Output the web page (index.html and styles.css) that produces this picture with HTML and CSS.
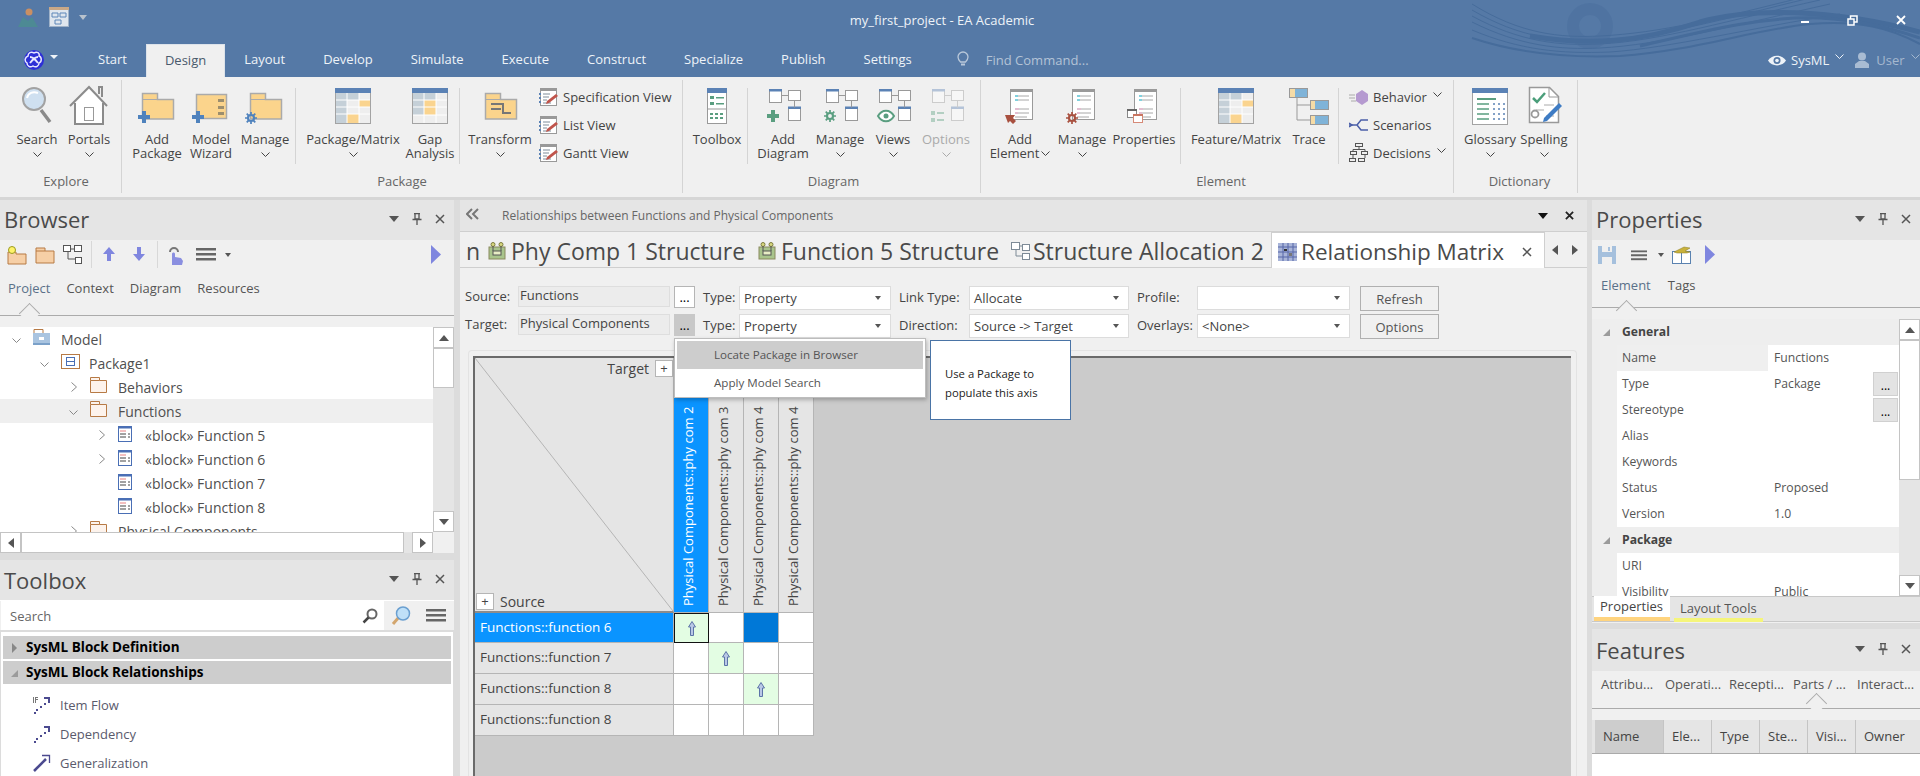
FILE: index.html
```html
<!DOCTYPE html>
<html lang="en">
<head>
  <meta charset="UTF-8" />
  <title>my_first_project - EA Academic</title>
  <link rel="stylesheet" href="styles.css">
</head>
<body>
  <svg class="defs" width="0" height="0">
    <defs>
      <symbol id="folder" viewBox="0 0 40 40"><path d="M5.5 8.5h15v6h16v19.500h-31z" fill="#fbd48c" stroke="#aaa" stroke-width="1.500"/><path d="M5.500 14.500h15" stroke="#aaa"/></symbol>
      <symbol id="plus-blue" viewBox="0 0 14 14"><path d="M5 1h4v4h4v4H9v4H5V9H1V5h4z" fill="#4f82bd"/></symbol>
      <symbol id="plus-green" viewBox="0 0 14 14"><path d="M5 1h4v4h4v4H9v4H5V9H1V5h4z" fill="#5a9e80"/></symbol>
      <symbol id="gear" viewBox="0 0 14 14"><circle cx="7" cy="7" r="3.500" fill="none" stroke="currentColor" stroke-width="2.500"/><path d="M7 0v3M7 11v3M0 7h3M11 7h3M2 2l2 2M10 10l2 2M12 2l-2 2M4 10l-2 2" stroke="currentColor" stroke-width="2"/></symbol>
      <symbol id="matrix" viewBox="0 0 40 40"><rect x="2.500" y="3.500" width="35" height="35" fill="#eee" stroke="#a3a3a3"/><rect x="2" y="3" width="36" height="5" fill="#5b82b5"/><path d="M3 8h11v30H3z" fill="#c5d0d8"/><path d="M14 8h12v7H14z" fill="#c5d0d8"/><path d="M26 15h11v7H26z" fill="#fad48f"/><path d="M14 29h12v9H14z" fill="#fad48f"/><path d="M3 15h34M3 22h34M3 29h34M14 8v30M26 8v30" stroke="#fff"/></symbol>
      <symbol id="matrix2" viewBox="0 0 40 40"><rect x="2.500" y="3.500" width="35" height="35" fill="#eee" stroke="#a3a3a3"/><rect x="2" y="3" width="36" height="5" fill="#5b82b5"/><path d="M3 8h11v22H3zM14 8h12v7H14z" fill="#c5d0d8"/><path d="M14 15h12v15H14z" fill="#fad48f"/><path d="M3 15h34M3 22h34M3 30h34M14 8v30M26 8v30" stroke="#fff"/></symbol>
      <symbol id="spec" viewBox="0 0 20 20"><rect x="1.500" y="1.500" width="16" height="17" fill="#fff" stroke="#999"/><path d="M1 1h17v3H1z" fill="#999"/><path d="M4 7h7M4 10h6M4 13h4M4 16h8" stroke="#7f8c99"/><path d="M0 6h2v2H0zM0 10h2v2H0zM0 14h2v2H0z" fill="#5b82b5"/><path d="M8 14l9-7 2 2-9 7-3 1z" fill="#c0544b"/></symbol>
      <symbol id="diagram" viewBox="0 0 40 40"><rect x="6.500" y="5.500" width="12" height="12" fill="#fff" stroke="#999"/><path d="M6 4h13v2.500H6z" fill="#5b82b5"/><rect x="25.500" y="5.500" width="12" height="10" fill="#fff" stroke="#999"/><rect x="25.500" y="22.500" width="12" height="13" fill="#fff" stroke="#999"/><path d="M25 21.500h13V24H25z" fill="#5b82b5"/><path d="M19 10.500h6M31.500 15.500v7" stroke="#999"/></symbol>
      <symbol id="sheet" viewBox="0 0 40 40"><rect x="10.500" y="4.500" width="22" height="30" fill="#fff" stroke="#9a9a9a"/><path d="M10 4h23v3H10z" fill="#9a9a9a"/><path d="M15 11h14M15 15h14M15 24h14M15 28h14M15 32h12" stroke="#a8a8a8"/><path d="M15 11h3M15 15h3" stroke="#33cfe8"/><path d="M15 24h4M15 28h3" stroke="#f2a9cf"/></symbol>
      <symbol id="block" viewBox="0 0 14 16"><rect x=".5" y=".5" width="13" height="15" fill="#fff" stroke="#4a6fb5"/><path d="M0 0h14v2.500H0z" fill="#4a6fb5"/><path d="M2 5h6" stroke="#e88080"/><path d="M2 8h6M2 11h6M10 8h2M10 11h2" stroke="#444"/></symbol>
      <symbol id="tree-folder" viewBox="0 0 17 17"><path d="M.5 3.500V.5h9v3h7v12H.5z" fill="#fdf3ec" stroke="#b77a45"/><path d="M.5 3.500h9" stroke="#b77a45"/></symbol>
      <symbol id="hamburger" viewBox="0 0 20 13"><path d="M0 0h20v2.500H0zM0 5h20v2.500H0zM0 10h20v2.500H0z" fill="#666"/></symbol>
      <symbol id="play" viewBox="0 0 10 19"><path d="M0 0l10 9.500L0 19z" fill="#7f86df"/></symbol>
      <symbol id="pin" viewBox="0 0 10 12"><path d="M2 .5h6M3 1v5h4V1M.5 6.500h9M5 7v5" fill="none" stroke="#555" stroke-width="1.300"/></symbol>
      <symbol id="cross" viewBox="0 0 10 10"><path d="M1 1l8 8M9 1L1 9" stroke="#555" stroke-width="1.500"/></symbol>
      <symbol id="chev-d" viewBox="0 0 9 5"><path d="M.5.500l4 4 4-4" fill="none" stroke="currentColor"/></symbol>
      <symbol id="chev-r" viewBox="0 0 6 10"><path d="M.5.500l5 4.500-5 4.500" fill="none" stroke="#888"/></symbol>
      <symbol id="up-arrow" viewBox="0 0 10 15"><path d="M5 .5L8.500 6H6.500v8.500h-3V6h-2z" fill="#b9c8e6" stroke="#5c74a8"/></symbol>
      <symbol id="struct" viewBox="0 0 18 18"><rect x="1" y="5" width="16" height="12" fill="#a9c48c" stroke="#8a8a5e"/><rect x="5" y="9" width="8" height="4" fill="#e8edc5" stroke="#555"/><circle cx="5" cy="2.500" r="2" fill="#d6d67e" stroke="#7c7c3e"/><circle cx="13" cy="2.500" r="2" fill="#d6d67e" stroke="#7c7c3e"/><path d="M5 4v5M13 4v5" stroke="#555"/></symbol>
    </defs>
  </svg>

  <div class="app">
    <div class="top">
      <svg class="swoosh" width="450" height="62" viewBox="0 0 450 62" fill="none" stroke="#466c9b">
        <circle cx="120" cy="26" r="17" stroke-width="12" opacity=".4"/>
        <path d="M2 4C50 34 90 38 130 36 190 33 250 18 330-2"/>
        <path d="M2 10C50 38 90 42 130 40 190 37 250 20 340-2"/>
        <path d="M2 16C50 42 90 46 130 44 190 41 260 20 350 0"/>
        <path d="M2 22C50 46 90 50 130 48 190 45 270 24 360 4"/>
        <path d="M2 30C50 50 90 54 140 52 200 48 280 28 370 14"/>
        <path d="M2 38C50 54 100 58 150 56 230 50 280 30 340 24 390 20 420 28 450 44" stroke-width="2"/>
        <path d="M60 36C120 46 170 42 230 22 280 8 360 8 450 32" stroke-width="5"/>
        <path d="M170 46C230 32 290 16 350 18 390 20 420 28 450 38" stroke-width="3"/>
      </svg>
      <header class="titlebar">
        <div class="quick">
          <svg class="q-user" width="20" height="19" viewBox="0 0 20 19"><circle cx="11" cy="4" r="3.500" fill="#c98f63"/><path d="M0 19l5-10 5 4 4-4 6 10z" fill="#4d8a94"/></svg>
          <svg class="q-diag" width="20" height="20" viewBox="0 0 20 20"><rect x=".5" y=".5" width="19" height="19" fill="#dfe6ee" stroke="#9fb2c8"/><path d="M0 0h20v3H0z" fill="#c9a887"/><path d="M3 6h6v4H3zM11 6h6v4h-6zM6 13h6v4H6z" fill="none" stroke="#5d86b8"/></svg>
          <span class="q-caret"></span>
        </div>
        <div class="title">my_first_project - EA Academic</div>
        <div class="winbtns">
          <span class="w-min"></span>
          <svg width="11" height="11" viewBox="0 0 11 11" fill="none" stroke="#fff" stroke-width="1.500"><rect x="3.500" y="1" width="6.500" height="6"/><rect x="1" y="4" width="6" height="6" fill="#5579a6"/></svg>
          <svg width="10" height="10" viewBox="0 0 10 10"><path d="M1 1l8 8M9 1L1 9" stroke="#fff" stroke-width="1.800"/></svg>
        </div>
      </header>

      <nav class="menu">
        <svg class="logo" width="20" height="20" viewBox="0 0 20 20"><circle cx="10" cy="10" r="10" fill="#2d2fd6"/><path d="M10 3c3-2 6 0 5 3 3 1 3 6 0 7 0 3-3 5-6 3-3 2-6 0-6-3-3-2-2-6 1-7 0-3 3-5 6-3z" fill="none" stroke="#e8e8ff" stroke-width="1.500"/><path d="M6 7c3 0 5 2 8 6M14 7c-3 0-5 2-8 6" fill="none" stroke="#e8e8ff" stroke-width="1.800"/></svg>
        <span class="logo-caret"></span>
        <a>Start</a>
        <a class="current">Design</a>
        <a>Layout</a>
        <a>Develop</a>
        <a>Simulate</a>
        <a>Execute</a>
        <a>Construct</a>
        <a>Specialize</a>
        <a>Publish</a>
        <a>Settings</a>
        <svg class="bulb" width="12" height="16" viewBox="0 0 12 16" fill="none" stroke="#b9c8da" stroke-width="1.300"><path d="M3.500 11C2 9.500 1 8.500 1 6a5 5 0 0 1 10 0c0 2.500-1 3.500-2.500 5z"/><path d="M4 13.500h4" stroke-width="2"/></svg>
        <span class="find">Find Command...</span>
        <div class="persp">
          <svg width="18" height="13" viewBox="0 0 18 13"><path d="M0 6.500C4 0 14 0 18 6.500 14 13 4 13 0 6.500z" fill="#eef3f8"/><circle cx="9" cy="6.500" r="3.500" fill="#5579a6"/><circle cx="9" cy="6.500" r="1.800" fill="#eef3f8"/></svg>
          <span class="p-name">SysML</span>
          <svg class="chev-w" width="9" height="5"><use href="#chev-d"/></svg>
          <svg class="p-user" width="14" height="16" viewBox="0 0 14 16"><circle cx="7" cy="4.500" r="4" fill="#a9bcd3"/><path d="M0 16v-4l4-3h6l4 3v4z" fill="#a9bcd3"/></svg>
          <span class="p-user-name">User</span>
          <svg class="chev-dim" width="9" height="5"><use href="#chev-d"/></svg>
        </div>
      </nav>
    </div>

    <section class="ribbon">
      <div class="rb-group g-explore">
        <div class="rb-items">
          <div class="rb-btn w52">
            <svg class="rb-ico" width="40" height="40" viewBox="0 0 40 40"><path d="M24 25l9 12" stroke="#8a8a8a" stroke-width="3.500"/><circle cx="17" cy="14" r="11" fill="#cfe0f0" stroke="#a2a2a2" stroke-width="2"/><path d="M10 13c1-5 6-7 11-5" stroke="#fff" stroke-width="2" fill="none"/></svg>
            <span>Search</span>
            <svg class="chev" width="9" height="5"><use href="#chev-d"/></svg>
          </div>
          <div class="rb-btn w52">
            <svg class="rb-ico" width="40" height="40" viewBox="0 0 40 40"><path d="M5 19L20 4l15 15v20H5z" fill="#fff"/><path d="M1 21L20 2l18 19M6 18v21h28V18M30 9V2h3v10" fill="none" stroke="#8b8b8b" stroke-width="2"/><rect x="15.500" y="22.500" width="9" height="13" fill="#fff" stroke="#999"/></svg>
            <span>Portals</span>
            <svg class="chev" width="9" height="5"><use href="#chev-d"/></svg>
          </div>
        </div>
        <div class="rb-label">Explore</div>
      </div>

      <div class="rb-group g-package">
        <div class="rb-items">
          <div class="rb-btn w54">
            <svg class="rb-ico" width="40" height="40"><use href="#folder" width="40" height="40"/><use href="#plus-blue" x="0" y="25" width="14" height="14"/></svg>
            <span>Add<br>Package</span>
          </div>
          <div class="rb-btn w54">
            <svg class="rb-ico" width="40" height="40"><path d="M5.500 9.500h30v24h-30z" fill="#fbd48c" stroke="#aaa" stroke-width="1.500"/><path d="M27 14h6v3h-6zM27 21h6v3h-6zM27 27h6v3h-6z" fill="#9c8e6e"/><use href="#plus-blue" x="0" y="25" width="14" height="14"/></svg>
            <span>Model<br>Wizard</span>
          </div>
          <div class="rb-btn w54">
            <svg class="rb-ico gear-blue" width="40" height="40"><use href="#folder" width="40" height="40"/><use href="#gear" x="0" y="27" width="12" height="12"/></svg>
            <span>Manage</span>
            <svg class="chev" width="9" height="5"><use href="#chev-d"/></svg>
          </div>
          <i class="rb-sep sep-a"></i>
          <div class="rb-btn w100">
            <svg class="rb-ico" width="40" height="40"><use href="#matrix" width="40" height="40"/></svg>
            <span>Package/Matrix</span>
            <svg class="chev" width="9" height="5"><use href="#chev-d"/></svg>
          </div>
          <div class="rb-btn w54">
            <svg class="rb-ico" width="40" height="40"><use href="#matrix2" width="40" height="40"/></svg>
            <span>Gap<br>Analysis</span>
          </div>
          <i class="rb-sep sep-b"></i>
          <div class="rb-btn w74">
            <svg class="rb-ico" width="40" height="40"><use href="#folder" width="40" height="40"/><path d="M11 19h12v9h8M15 24h-4M21 24h-6" fill="none" stroke="#777" stroke-width="2"/></svg>
            <span>Transform</span>
            <svg class="chev" width="9" height="5"><use href="#chev-d"/></svg>
          </div>
          <div class="rb-list l-views">
            <div class="rb-row"><svg width="20" height="20"><use href="#spec" width="20" height="20"/></svg><span>Specification View</span></div>
            <div class="rb-row"><svg width="20" height="20"><use href="#spec" width="20" height="20"/></svg><span>List View</span></div>
            <div class="rb-row"><svg width="20" height="20"><use href="#spec" width="20" height="20"/></svg><span>Gantt View</span></div>
          </div>
        </div>
        <div class="rb-label">Package</div>
      </div>

      <div class="rb-group g-diagram">
        <div class="rb-items">
          <div class="rb-btn w60">
            <svg class="rb-ico" width="40" height="40" viewBox="0 0 40 40"><rect x="10.500" y="3.500" width="19" height="35" fill="#fff" stroke="#999"/><path d="M10 3h20v5H10z" fill="#5b82b5"/><path d="M13 11h4v3h-4zM13 17h4v3h-4zM19 12h8v1.500h-8zM19 18h8v1.500h-8zM13 28h3v2h-3zM18 28h3v2h-3zM23 28h3v2h-3zM13 32h3v2h-3zM18 32h3v2h-3zM23 32h3v2h-3z" fill="#5a9e80"/><path d="M11 24h18" stroke="#999"/></svg>
            <span>Toolbox</span>
          </div>
          <i class="rb-sep sep-c"></i>
          <div class="rb-btn w58">
            <svg class="rb-ico" width="40" height="40"><use href="#diagram" width="40" height="40"/><use href="#plus-green" x="3" y="24" width="14" height="14"/></svg>
            <span>Add<br>Diagram</span>
          </div>
          <div class="rb-btn w56">
            <svg class="rb-ico gear-green" width="40" height="40"><use href="#diagram" width="40" height="40"/><use href="#gear" x="4" y="25" width="12" height="12"/></svg>
            <span>Manage</span>
            <svg class="chev" width="9" height="5"><use href="#chev-d"/></svg>
          </div>
          <div class="rb-btn w50">
            <svg class="rb-ico" width="40" height="40"><use href="#diagram" width="40" height="40"/><path d="M5 31c4-7 12-7 16 0-4 7-12 7-16 0z" fill="#fff" stroke="#5a9e80" stroke-width="2"/><circle cx="13" cy="31" r="2.500" fill="#5a9e80"/></svg>
            <span>Views</span>
            <svg class="chev" width="9" height="5"><use href="#chev-d"/></svg>
          </div>
          <div class="rb-btn w56 disabled">
            <svg class="rb-ico faded" width="40" height="40"><use href="#diagram" width="40" height="40"/><path d="M5 26h4v4H5zM5 33h4v4H5zM11 27h7v2h-7zM11 34h7v2h-7z" fill="#5a9e80"/></svg>
            <span>Options</span>
            <svg class="chev" width="9" height="5"><use href="#chev-d"/></svg>
          </div>
        </div>
        <div class="rb-label">Diagram</div>
      </div>

      <div class="rb-group g-element">
        <div class="rb-items">
          <div class="rb-btn w62">
            <svg class="rb-ico" width="40" height="40"><use href="#sheet" width="40" height="40"/><path d="M5 30h10l-2 3 3 3-3 3-3-3-2 2z" fill="#a8503f"/></svg>
            <span>Add<br>Element<svg class="chev-in" width="9" height="5"><use href="#chev-d"/></svg></span>
          </div>
          <div class="rb-btn w62">
            <svg class="rb-ico gear-red" width="40" height="40"><use href="#sheet" width="40" height="40"/><use href="#gear" x="4" y="27" width="12" height="12"/></svg>
            <span>Manage</span>
            <svg class="chev" width="9" height="5"><use href="#chev-d"/></svg>
          </div>
          <div class="rb-btn w62">
            <svg class="rb-ico" width="40" height="40"><use href="#sheet" width="40" height="40"/><rect x="3.500" y="24.500" width="9" height="8" fill="#fff" stroke="#888"/><path d="M3 24h10v2H3z" fill="#666"/><rect x="9.500" y="29.500" width="9" height="8" fill="#fff" stroke="#d68a78"/><path d="M9 29h10v2H9z" fill="#c97560"/></svg>
            <span>Properties</span>
          </div>
          <i class="rb-sep sep-d"></i>
          <div class="rb-btn w100">
            <svg class="rb-ico" width="40" height="40"><use href="#matrix" width="40" height="40"/></svg>
            <span>Feature/Matrix</span>
          </div>
          <div class="rb-btn w46">
            <svg class="rb-ico" width="40" height="40" viewBox="0 0 40 40"><path d="M8 14v23M8 22h14M8 37h14" transform="translate(0 -2)" stroke="#999" fill="none"/><rect x=".5" y="3.500" width="18" height="9" fill="#7fb3d8" stroke="#999"/><path d="M1 4h5v8H1z" fill="#f5dba6"/><rect x="21.500" y="15.500" width="18" height="9" fill="#7fb3d8" stroke="#999"/><path d="M22 16h4v8h-4z" fill="#f5dba6"/><rect x="21.500" y="30.500" width="18" height="9" fill="#7fb3d8" stroke="#999"/><path d="M22 31h4v8h-4z" fill="#f5dba6"/></svg>
            <span>Trace</span>
          </div>
          <i class="rb-sep sep-e"></i>
          <div class="rb-list l-elem">
            <div class="rb-row">
              <svg width="20" height="20" viewBox="0 0 20 20"><path d="M0 8h6M0 11h6M2 14h5" stroke="#aaa"/><path d="M13 3l6 4v7l-6 4-6-4V7z" fill="#b59ad0"/></svg>
              <span>Behavior</span><svg class="chev-in" width="9" height="5"><use href="#chev-d"/></svg>
            </div>
            <div class="rb-row">
              <svg width="20" height="20" viewBox="0 0 20 20" fill="none" stroke="#4b5fa8" stroke-width="1.500"><path d="M0 10h8M8 10l4-5h7M8 10l4 5h7"/><path d="M0 8l3 2-3 2" /></svg>
              <span>Scenarios</span>
            </div>
            <div class="rb-row">
              <svg width="20" height="20" viewBox="0 0 20 20" fill="none" stroke="#555"><rect x="6.500" y=".5" width="7" height="3"/><rect x="1.500" y="8.500" width="6" height="3"/><rect x="12.500" y="8.500" width="6" height="3"/><rect x=".5" y="15.500" width="6" height="3"/><rect x="9.500" y="15.500" width="6" height="3"/><path d="M10 4v3M4 8V6.500h12V8M4 12v3M16 12v3"/></svg>
              <span>Decisions</span><svg class="chev-in" width="9" height="5"><use href="#chev-d"/></svg>
            </div>
          </div>
        </div>
        <div class="rb-label">Element</div>
      </div>

      <div class="rb-group g-dict">
        <div class="rb-items">
          <div class="rb-btn w56">
            <svg class="rb-ico" width="40" height="40" viewBox="0 0 40 40"><rect x="2.500" y="3.500" width="35" height="36" fill="#fff" stroke="#a3a3a3"/><path d="M2 3h36v5H2z" fill="#5b82b5"/><path d="M7 13h19v2H7z" fill="#5a9e80"/><path d="M7 19h12M7 24h12M7 29h12M7 34h12" stroke="#5a9e80" stroke-width="1.500"/><path d="M23 19h2M28 19h2M33 19h2M23 24h2M28 24h2M33 24h2M23 29h2M28 29h2M33 29h2M23 34h2M28 34h2M33 34h2" stroke="#5b82b5" stroke-width="1.500"/></svg>
            <span>Glossary</span>
            <svg class="chev" width="9" height="5"><use href="#chev-d"/></svg>
          </div>
          <div class="rb-btn w52">
            <svg class="rb-ico" width="40" height="40" viewBox="0 0 40 40"><path d="M5.500 2.500h20l9 9v26h-29z" fill="#fff" stroke="#999" stroke-width="1.500"/><path d="M25 3v9h9" fill="none" stroke="#999"/><path d="M9 13l4 4 8-9" fill="none" stroke="#4b9e7a" stroke-width="2.500"/><path d="M20 20h10M12 25h8M22 31h8" stroke="#aaa"/><circle cx="11" cy="29" r="3.500" fill="none" stroke="#999" stroke-width="1.800"/><path d="M20 33l15-15 3 3-15 15-4 1z" fill="#3f7cc4"/></svg>
            <span>Spelling</span>
            <svg class="chev" width="9" height="5"><use href="#chev-d"/></svg>
          </div>
        </div>
        <div class="rb-label">Dictionary</div>
      </div>
    </section>

    <main class="workspace">
      <div class="side">
        <section class="browser">
          <div class="pane-head">
            <h2>Browser</h2>
            <div class="pane-ctrl">
              <i class="tri"></i>
              <svg width="10" height="12"><use href="#pin"/></svg>
              <svg width="10" height="10"><use href="#cross"/></svg>
            </div>
          </div>
          <div class="tbar">
            <svg class="b1" width="20" height="19" viewBox="0 0 20 19"><path d="M1 6h8v2h10v10H1z" fill="#f6cfa6" stroke="#b77a45"/><circle cx="5" cy="4" r="3.500" fill="#fff36a" stroke="#9a9a20"/></svg>
            <svg class="b2" width="20" height="17" viewBox="0 0 20 17"><path d="M1 4V1h9v3h9v12H1z" fill="#f6cfa6" stroke="#b77a45"/><path d="M1 4h9" stroke="#b77a45"/></svg>
            <svg class="b3" width="20" height="20" viewBox="0 0 20 20" fill="#fff" stroke="#555"><rect x=".5" y=".5" width="7" height="6"/><rect x="11.500" y=".5" width="7" height="6"/><rect x="12.500" y="12.500" width="6" height="6"/><path d="M8 4h3M5 7v7h7" fill="none"/></svg>
            <i class="tsep s1"></i>
            <svg class="b4" width="12" height="14" viewBox="0 0 12 14"><path d="M6 0l6 7H8v7H4V7H0z" fill="#7f86df"/></svg>
            <svg class="b5" width="12" height="14" viewBox="0 0 12 14"><path d="M6 14L0 7h4V0h4v7h4z" fill="#7f86df"/></svg>
            <i class="tsep s2"></i>
            <svg class="b6" width="16" height="20" viewBox="0 0 16 20"><path d="M4 20V9c0-2 3-2 3 0v3l6 1 2 3-1 4z" fill="#8a8fe0"/><path d="M2 7a4 4 0 1 1 8 0" fill="none" stroke="#777" stroke-width="2"/></svg>
            <svg class="b7" width="20" height="13"><use href="#hamburger"/></svg>
            <i class="tcaret b8"></i>
            <svg class="b9" width="10" height="19"><use href="#play"/></svg>
          </div>
          <div class="subtabs st-browser">
            <a class="on">Project</a><a>Context</a><a>Diagram</a><a>Resources</a>
          </div>
          <div class="tree-wrap">
            <div class="tree">
              <div class="t-row l0"><svg class="tw" width="9" height="5"><use href="#chev-d"/></svg><svg class="ti" width="17" height="17" viewBox="0 0 17 17"><path d="M1 4V.5h9V4" fill="#fff" stroke="#b77a45"/><path d="M0 4h17v12H0z" fill="#a9c4e0"/><path d="M0 14h17v2H0z" fill="#7ba1c9"/><rect x="6" y="8" width="5" height="3" fill="#fff"/></svg><span>Model</span></div>
              <div class="t-row l1"><svg class="tw" width="9" height="5"><use href="#chev-d"/></svg><svg class="ti big" width="19" height="15" viewBox="0 0 19 15"><rect x=".5" y=".5" width="18" height="14" fill="#fff" stroke="#b77a45"/><rect x="5.500" y="3.500" width="8" height="8" fill="none" stroke="#4a6fb5"/><path d="M5 7.500h9" stroke="#4a6fb5"/></svg><span>Package1</span></div>
              <div class="t-row l2"><svg class="tr" width="6" height="10"><use href="#chev-r"/></svg><svg class="ti" width="17" height="17"><use href="#tree-folder"/></svg><span>Behaviors</span></div>
              <div class="t-row l2 hl"><svg class="tw" width="9" height="5"><use href="#chev-d"/></svg><svg class="ti" width="17" height="17"><use href="#tree-folder"/></svg><span>Functions</span></div>
              <div class="t-row l3"><svg class="tr" width="6" height="10"><use href="#chev-r"/></svg><svg class="ti" width="14" height="16"><use href="#block" width="14" height="16"/></svg><span>«block» Function 5</span></div>
              <div class="t-row l3"><svg class="tr" width="6" height="10"><use href="#chev-r"/></svg><svg class="ti" width="14" height="16"><use href="#block" width="14" height="16"/></svg><span>«block» Function 6</span></div>
              <div class="t-row l3"><i class="tn"></i><svg class="ti" width="14" height="16"><use href="#block" width="14" height="16"/></svg><span>«block» Function 7</span></div>
              <div class="t-row l3"><i class="tn"></i><svg class="ti" width="14" height="16"><use href="#block" width="14" height="16"/></svg><span>«block» Function 8</span></div>
              <div class="t-row l2"><svg class="tr" width="6" height="10"><use href="#chev-r"/></svg><svg class="ti" width="17" height="17"><use href="#tree-folder"/></svg><span>Physical Components</span></div>
            </div>
            <div class="vscroll">
              <div class="sb-btn"><i class="arr-up"></i></div>
              <div class="sb-thumb th-tree"></div>
              <div class="sb-track"></div>
              <div class="sb-btn"><i class="arr-down"></i></div>
            </div>
          </div>
          <div class="hscroll">
            <div class="sb-btn h"><i class="arr-left"></i></div>
            <div class="sb-thumb h"></div>
            <div class="sb-track"></div>
            <div class="sb-btn h"><i class="arr-right"></i></div>
            <div class="sb-corner"></div>
          </div>
        </section>

        <section class="toolbox">
          <div class="pane-head">
            <h2>Toolbox</h2>
            <div class="pane-ctrl">
              <i class="tri"></i>
              <svg width="10" height="12"><use href="#pin"/></svg>
              <svg width="10" height="10"><use href="#cross"/></svg>
            </div>
          </div>
          <div class="tb-search">
            <div class="tb-input">
              <span>Search</span>
              <svg width="16" height="16" viewBox="0 0 16 16"><circle cx="10" cy="6" r="4.500" fill="#fff" stroke="#666" stroke-width="2"/><path d="M6.500 9.500L1.500 14.500" stroke="#444" stroke-width="2.500"/></svg>
            </div>
            <svg class="tb-find" width="20" height="20" viewBox="0 0 20 20"><path d="M8 11l-6 7" stroke="#d3a66e" stroke-width="3"/><circle cx="12" cy="7.500" r="6.500" fill="#bfe0f8" stroke="#6a9fd0" stroke-width="1.500"/></svg>
            <svg class="tb-menu" width="20" height="13"><use href="#hamburger"/></svg>
          </div>
          <div class="tb-list">
            <div class="tb-band"><i class="tb-open"></i>SysML Block Definition</div>
            <div class="tb-band"><i class="tb-shut"></i>SysML Block Relationships</div>
            <div class="tb-items">
              <div class="tb-item">
                <svg width="18" height="18" viewBox="0 0 18 18" fill="#4b4a8f"><path d="M0 1h1v6H0zM2 1h3v1H3v1h2v1H3v3H2z" fill="#777"/><path d="M11 1h6v6h-2V3h-4zM11 7h2v2h-2zM7 10h2v2H7zM3 13h2v2H3zM1 16h2v2H1z"/></svg>
                <span>Item Flow</span>
              </div>
              <div class="tb-item">
                <svg width="18" height="18" viewBox="0 0 18 18" fill="#4b4a8f"><path d="M11 1h6v6h-2V3h-4zM11 7h2v2h-2zM7 10h2v2H7zM3 13h2v2H3zM1 16h2v2H1z"/></svg>
                <span>Dependency</span>
              </div>
              <div class="tb-item">
                <svg width="18" height="18" viewBox="0 0 18 18" fill="none"><path d="M1 17L13 5" stroke="#4b4a8f" stroke-width="2.500"/><path d="M9 1.500h7.500V9" stroke="#4b4a8f" stroke-width="1.300"/></svg>
                <span>Generalization</span>
              </div>
            </div>
          </div>
        </section>
      </div>

      <section class="center">
        <div class="c-head">
          <svg class="c-back" width="13" height="12" viewBox="0 0 13 12" fill="none" stroke="#777" stroke-width="2"><path d="M6 1L1 6l5 5M12 1L7 6l5 5"/></svg>
          <span class="c-title">Relationships between Functions and Physical Components</span>
          <i class="tri dark"></i>
          <svg class="c-x" width="9" height="9" viewBox="0 0 10 10"><path d="M1 1l8 8M9 1L1 9" stroke="#222" stroke-width="2"/></svg>
        </div>
        <div class="c-tabs">
          <div class="c-strip">
            <span class="ct t-cut">n</span>
            <span class="ct t-phy"><svg width="18" height="18"><use href="#struct"/></svg>Phy Comp 1 Structure</span>
            <span class="ct t-fun"><svg width="18" height="18"><use href="#struct"/></svg>Function 5 Structure</span>
            <span class="ct t-str"><svg width="20" height="18" viewBox="0 0 20 18" fill="#fff" stroke="#7d8a96"><rect x=".5" y=".5" width="8" height="7"/><rect x="11.500" y="2.500" width="7" height="6"/><rect x="11.500" y="11.500" width="7" height="6"/><path d="M9 4h2M5 8v6h6" fill="none"/></svg>Structure Allocation 2</span>
          </div>
          <div class="ct-active">
            <svg width="19" height="18" viewBox="0 0 19 18"><rect width="19" height="18" fill="#a8b4d8"/><path d="M0 4h19M0 9h19M0 14h19M5 0v18M10 0v18M15 0v18" stroke="#5667a8"/><rect x="6" y="6" width="3" height="2" fill="#333"/><rect x="11" y="10" width="3" height="3" fill="#777"/></svg>
            <span>Relationship Matrix</span>
            <svg class="ct-x" width="10" height="10"><use href="#cross"/></svg>
          </div>
          <i class="arr-left nav"></i>
          <i class="arr-right nav"></i>
        </div>
        <form class="mx-form">
          <label class="f-lab side-lab">Source:</label>
          <div class="f-box">Functions</div>
          <button type="button" class="dots">...</button>
          <label class="f-lab pl">Type:</label>
          <div class="f-sel">Property</div>
          <label class="f-lab pl">Link Type:</label>
          <div class="f-sel">Allocate</div>
          <label class="f-lab pl">Profile:</label>
          <div class="f-sel"></div>
          <button type="button" class="f-btn">Refresh</button>

          <label class="f-lab side-lab">Target:</label>
          <div class="f-box">Physical Components</div>
          <button type="button" class="dots pressed">...</button>
          <label class="f-lab pl">Type:</label>
          <div class="f-sel">Property</div>
          <label class="f-lab pl">Direction:</label>
          <div class="f-sel">Source -&gt; Target</div>
          <label class="f-lab pl">Overlays:</label>
          <div class="f-sel">&lt;None&gt;</div>
          <button type="button" class="f-btn">Options</button>
        </form>
        <div class="mx-frame">
          <div class="mx-view">
            <div class="mx-grid">
              <div class="mx-corner">
                <svg class="mx-diag" viewBox="0 0 100 100" preserveAspectRatio="none"><line x1="0" y1="0" x2="100" y2="100" stroke="#b5b5b5" stroke-width="1" vector-effect="non-scaling-stroke"/></svg>
                <div class="mx-axis ax-top"><span>Target</span><b class="mx-plus">+</b></div>
                <div class="mx-axis ax-bottom"><b class="mx-plus">+</b><span>Source</span></div>
              </div>
              <div class="mx-col sel"><span>Physical Components::phy com 2</span></div>
              <div class="mx-col"><span>Physical Components::phy com 3</span></div>
              <div class="mx-col"><span>Physical Components::phy com 4</span></div>
              <div class="mx-col"><span>Physical Components::phy com 4</span></div>

              <div class="mx-row sel">Functions::function 6</div>
              <div class="mx-cell hit cur"><svg width="10" height="15"><use href="#up-arrow"/></svg></div>
              <div class="mx-cell"></div>
              <div class="mx-cell blue"></div>
              <div class="mx-cell"></div>

              <div class="mx-row">Functions::function 7</div>
              <div class="mx-cell"></div>
              <div class="mx-cell hit"><svg width="10" height="15"><use href="#up-arrow"/></svg></div>
              <div class="mx-cell"></div>
              <div class="mx-cell"></div>

              <div class="mx-row">Functions::function 8</div>
              <div class="mx-cell"></div>
              <div class="mx-cell"></div>
              <div class="mx-cell hit"><svg width="10" height="15"><use href="#up-arrow"/></svg></div>
              <div class="mx-cell"></div>

              <div class="mx-row">Functions::function 8</div>
              <div class="mx-cell"></div>
              <div class="mx-cell"></div>
              <div class="mx-cell"></div>
              <div class="mx-cell"></div>
            </div>
          </div>
        </div>
        <div class="popup">
          <div class="popup-item on">Locate Package in Browser</div>
          <div class="popup-item">Apply Model Search</div>
        </div>
        <div class="tip">Use a Package to<br>populate this axis</div>
      </section>

      <div class="side right">
        <section class="props">
          <div class="pane-head">
            <h2>Properties</h2>
            <div class="pane-ctrl">
              <i class="tri"></i>
              <svg width="10" height="12"><use href="#pin"/></svg>
              <svg width="10" height="10"><use href="#cross"/></svg>
            </div>
          </div>
          <div class="tbar">
            <svg class="p1" width="18" height="18" viewBox="0 0 18 18"><path d="M0 0h18v18H0z" fill="#a5c0dd"/><path d="M4 0h10v6H4zM4 11h10v7H4z" fill="#f0f0f0"/><path d="M10 1h2v4h-2z" fill="#a5c0dd"/></svg>
            <svg class="p2" width="16" height="13" viewBox="0 0 20 13"><use href="#hamburger"/></svg>
            <i class="tcaret p3"></i>
            <svg class="p4" width="19" height="18" viewBox="0 0 19 18"><rect x=".5" y="5.500" width="18" height="12" fill="#fff" stroke="#5a82b0"/><path d="M9.500 6v12" stroke="#5a82b0"/><path d="M2 6l10-5 6 1-5 3 5 1-3 1H5z" fill="#c9b23c" stroke="#8a7a20" stroke-width=".5"/></svg>
            <svg class="p5" width="10" height="19"><use href="#play"/></svg>
          </div>
          <div class="subtabs st-props">
            <a class="on">Element</a><a>Tags</a>
          </div>
          <div class="pg-wrap">
            <div class="pg">
              <div class="pg-cat"><i class="tb-shut"></i><b>General</b></div>
              <div class="pg-row name"><span>Name</span><span>Functions</span></div>
              <div class="pg-row"><span>Type</span><span>Package</span><button type="button" class="pg-dots">...</button></div>
              <div class="pg-row"><span>Stereotype</span><span></span><button type="button" class="pg-dots">...</button></div>
              <div class="pg-row"><span>Alias</span><span></span></div>
              <div class="pg-row"><span>Keywords</span><span></span></div>
              <div class="pg-row"><span>Status</span><span>Proposed</span></div>
              <div class="pg-row"><span>Version</span><span>1.0</span></div>
              <div class="pg-cat"><i class="tb-shut"></i><b>Package</b></div>
              <div class="pg-row"><span>URI</span><span></span></div>
              <div class="pg-row"><span>Visibility</span><span>Public</span></div>
            </div>
            <div class="vscroll">
              <div class="sb-btn"><i class="arr-up"></i></div>
              <div class="sb-thumb th-pg"></div>
              <div class="sb-track"></div>
              <div class="sb-btn"><i class="arr-down"></i></div>
            </div>
          </div>
          <div class="dock-tabs">
            <a class="on">Properties</a>
            <a class="yl">Layout Tools</a>
          </div>
        </section>
        <section class="features">
          <div class="pane-head">
            <h2>Features</h2>
            <div class="pane-ctrl">
              <i class="tri"></i>
              <svg width="10" height="12"><use href="#pin"/></svg>
              <svg width="10" height="10"><use href="#cross"/></svg>
            </div>
          </div>
          <div class="subtabs st-feat">
            <a>Attribu...</a><a>Operati...</a><a>Recepti...</a><a class="on">Parts / ...</a><a>Interact...</a>
          </div>
          <div class="ft-gap"></div>
          <div class="ft-head">
            <span class="first">Name</span><span>Ele...</span><span>Type</span><span>Ste...</span><span>Visi...</span><span class="last">Owner</span>
          </div>
        </section>
      </div>
    </main>
  </div>
</body>
</html>
```

FILE: styles.css
```css
* {
  box-sizing: border-box;
  margin: 0;
  padding: 0;
}
html, body {
  height: 776px;
  overflow: hidden;
}
body {
  font-family: 'Open Sans', 'Noto Sans', sans-serif;
  font-size: 13px;
  color: #444;
  background: #dcdcdc;
}
.defs {
  position: absolute;
}
i {
  display: block;
  flex: none;
}
svg {
  display: block;
  flex: none;
}

/* title bar + menu */
.top {
  position: relative;
  height: 77px;
  background: #5579a6;
  color: #eef3f8;
}
.swoosh {
  position: absolute;
  left: 1470px;
  top: 0;
}
.titlebar {
  position: relative;
  height: 44px;
  display: flex;
  align-items: flex-start;
}
.quick {
  display: flex;
  width: 300px;
  padding: 7px 0 0 18px;
  align-items: center;
}
.q-caret {
  width: 0;
  height: 0;
  margin-left: 10px;
  border: 4px solid transparent;
  border-top: 5px solid #b8c2cd;
  border-bottom: 0;
}
.q-diag {
  margin-left: 11px;
}
.title {
  width: 1284px;
  padding-top: 11px;
  text-align: center;
  line-height: 18px;
}
.winbtns {
  display: flex;
  align-items: center;
  height: 40px;
  margin-left: 217px;
  gap: 38px;
}
.w-min {
  width: 8px;
  height: 2px;
  margin-top: 3px;
  background: #fff;
}
.menu {
  position: relative;
  height: 33px;
  display: flex;
  align-items: stretch;
}
.logo {
  margin: 6px 0 0 24px;
}
.logo-caret {
  width: 0;
  height: 0;
  margin: 11px 0 0 6px;
  border: 4px solid transparent;
  border-top: 4px solid #eef3f8;
  border-bottom: 0;
}
.menu a {
  padding: 0 19px;
  line-height: 30px;
}
.menu a:first-of-type {
  margin-left: 21px;
}
.menu a.current {
  background: #f0f0f0;
  color: #4a5a6c;
  border: 1px solid #dde3ea;
  border-bottom: 0;
  padding: 0 18px;
}
.bulb {
  margin: 7px 0 0 26px;
}
.find {
  margin-left: 17px;
  line-height: 32px;
  color: #b4c3d6;
}
.persp {
  position: absolute;
  left: 1768px;
  top: 0;
  height: 32px;
  display: flex;
  align-items: center;
}
.p-name {
  margin-left: 5px;
}
.chev-w {
  margin: -8px 0 0 6px;
}
.p-user {
  margin-left: 11px;
}
.p-user-name {
  margin-left: 7px;
  color: #a5b8cf;
}
.chev-dim {
  margin: -8px 0 0 6px;
  color: #a5b8cf;
}

/* ribbon */
.ribbon {
  height: 123px;
  padding-top: 3px;
  display: flex;
  background: #f0f0f0;
  border-bottom: 3px solid #d6d6d6;
}
.rb-group {
  height: 113px;
  display: flex;
  flex-direction: column;
  border-right: 1px solid #d4d4d4;
  flex: none;
}
.g-explore { width: 122px; padding-left: 11px; }
.g-package { width: 561px; padding-left: 8px; }
.g-diagram { width: 298px; padding-left: 4px; }
.g-element { width: 473px; padding-left: 8px; }
.g-dict { width: 124px; padding-left: 8px; }
.rb-items {
  display: flex;
  height: 92px;
}
.rb-label {
  height: 21px;
  line-height: 18px;
  text-align: center;
  color: #666;
}
.g-package .rb-label { margin-left: -8px; }
.rb-btn {
  display: flex;
  flex-direction: column;
  align-items: center;
  padding-top: 5px;
  line-height: 14px;
  text-align: center;
  flex: none;
  white-space: nowrap;
}
.rb-ico {
  margin-bottom: 7px;
}
.chev {
  margin-top: 6px;
}
.chev-in {
  display: inline-block;
  margin-left: 2px;
  vertical-align: 2px;
}
.w46 { width: 46px; }
.w50 { width: 50px; }
.w52 { width: 52px; }
.w54 { width: 54px; }
.w56 { width: 56px; }
.w58 { width: 58px; }
.w60 { width: 60px; }
.w62 { width: 62px; }
.w74 { width: 74px; }
.w100 { width: 100px; }
.rb-sep {
  width: 1px;
  height: 76px;
  margin-top: 8px;
  background: #d4d4d4;
}
.sep-a { margin-left: 3px; margin-right: 7px; }
.sep-b { margin-left: 2px; margin-right: 3px; }
.sep-c { margin-right: 6px; }
.sep-d { margin-left: 5px; margin-right: 5px; }
.sep-e { margin-left: 6px; margin-right: 5px; }
.disabled {
  color: #aaa;
}
.faded {
  opacity: .4;
}
.gear-blue { color: #4f82bd; }
.gear-green { color: #5a9e80; }
.gear-red { color: #a8503f; }
.rb-list {
  padding-top: 3px;
  display: flex;
  flex-direction: column;
}
.l-views { margin-left: 2px; }
.l-elem { margin-left: 5px; }
.rb-row {
  height: 28px;
  display: flex;
  align-items: center;
  gap: 4px;
  white-space: nowrap;
}
.rb-row .chev-in {
  margin: -6px 0 0 2px;
}

/* workspace */
.workspace {
  height: 576px;
  display: flex;
  background: #dcdcdc;
}
.side {
  width: 454px;
  flex: none;
  display: flex;
  flex-direction: column;
}
.side.right {
  width: 328px;
}
.pane-head {
  height: 40px;
  display: flex;
  align-items: center;
  justify-content: space-between;
  padding: 0 9px 0 4px;
  background: #e5e5e5;
}
.pane-head h2 {
  font-size: 22px;
  font-weight: 400;
  line-height: 40px;
  color: #4a4a4a;
}
.browser h2, .props h2 {
  margin-top: -2px;
}
.pane-ctrl {
  display: flex;
  align-items: center;
  gap: 13px;
  margin-top: -2px;
}
.tri {
  width: 0;
  height: 0;
  border: 5px solid transparent;
  border-top: 6px solid #555;
  border-bottom: 0;
}
.tri.dark {
  border-top-color: #111;
}
.tbar {
  position: relative;
  height: 30px;
  background: #f0f0f0;
}
.tbar > * {
  position: absolute;
  top: 6px;
}
.b1 { left: 7px; }
.b2 { left: 35px; top: 7px; }
.b3 { left: 63px; top: 5px; }
.s1 { left: 91px; }
.b4 { left: 103px; top: 7px; }
.b5 { left: 133px; top: 7px; }
.s2 { left: 157px; }
.b6 { left: 168px; top: 5px; }
.b7 { left: 196px; top: 8px; }
.b8 { left: 225px; top: 13px; }
.b9 { left: 431px; top: 5px; }
.p1 { left: 6px; top: 6px; }
.p2 { left: 39px; top: 9px; }
.p3 { left: 66px; top: 13px; }
.p4 { left: 80px; top: 6px; }
.p5 { left: 113px; top: 5px; }
.tsep {
  width: 1px;
  height: 27px;
  top: 1px;
  background: #d8d8d8;
}
.tcaret {
  width: 0;
  height: 0;
  border: 3px solid transparent;
  border-top: 4px solid #555;
  border-bottom: 0;
}
.subtabs {
  height: 46px;
  padding-top: 9px;
  display: flex;
  background: #f0f0f0;
  border-bottom: 1px solid #ababab;
  line-height: 18px;
}
.subtabs a {
  position: relative;
  display: block;
  height: 36px;
}
.subtabs a.on::after {
  content: "";
  position: absolute;
  left: 50%;
  bottom: -6px;
  width: 14px;
  height: 14px;
  margin-left: -7px;
  transform: rotate(45deg);
  background: #f0f0f0;
  border-top: 1px solid #ababab;
  border-left: 1px solid #ababab;
}
.st-browser {
  padding-left: 8px;
  gap: 16px;
  color: #555;
}
.st-browser .on { color: #5a7089; }

/* browser tree */
.browser {
  height: 353px;
  flex: none;
  background: #f0f0f0;
}
.tree-wrap {
  margin-top: 11px;
  height: 205px;
  display: flex;
  background: #fff;
}
.tree {
  flex: 1;
  overflow: hidden;
  font-size: 14px;
}
.t-row {
  height: 24px;
  display: flex;
  align-items: center;
  white-space: nowrap;
  color: #4f4f4f;
}
.t-row.hl {
  background: #efefef;
}
.l0 { padding-left: 12px; }
.l1 { padding-left: 40px; }
.l2 { padding-left: 69px; }
.l3 { padding-left: 97px; }
.tw {
  width: 9px;
  margin: 3px 12px 0 0;
  color: #888;
}
.tr {
  margin: 0 13px 0 2px;
}
.tn {
  width: 21px;
}
.ti {
  margin-right: 11px;
  margin-top: -4px;
}
.l3 .ti {
  margin-right: 13px;
  margin-top: -3px;
}
.ti.big {
  margin-right: 9px;
}
.vscroll {
  width: 21px;
  flex: none;
  display: flex;
  flex-direction: column;
  background: #e5e5e5;
}
.sb-btn {
  height: 21px;
  flex: none;
  display: flex;
  align-items: center;
  justify-content: center;
  background: #fff;
  border: 1px solid #c4c4c4;
}
.sb-btn.h {
  width: 21px;
  height: 21px;
}
.sb-thumb {
  flex: none;
  background: #fff;
  border: 1px solid #c4c4c4;
}
.th-tree { height: 40px; }
.th-pg { height: 140px; }
.sb-track {
  flex: 1;
}
.arr-up, .arr-down {
  width: 0;
  height: 0;
  border-left: 5px solid transparent;
  border-right: 5px solid transparent;
}
.arr-up { border-bottom: 6px solid #555; }
.arr-down { border-top: 6px solid #555; }
.arr-left, .arr-right {
  width: 0;
  height: 0;
  border-top: 5px solid transparent;
  border-bottom: 5px solid transparent;
}
.arr-left { border-right: 6px solid #555; }
.arr-right { border-left: 6px solid #555; }
.hscroll {
  height: 21px;
  display: flex;
  background: #e5e5e5;
}
.sb-thumb.h {
  width: 383px;
}
.sb-corner {
  width: 21px;
  background: #f0f0f0;
}

/* toolbox */
.toolbox {
  flex: 1;
  margin-top: 7px;
  background: #f0f0f0;
  overflow: hidden;
}
.tb-search {
  height: 31px;
  display: flex;
  align-items: center;
  border-top: 1px solid #fff;
  border-bottom: 1px solid #dcdcdc;
}
.tb-input {
  width: 383px;
  height: 29px;
  margin-left: 1px;
  display: flex;
  align-items: center;
  justify-content: space-between;
  padding: 0 6px 0 9px;
  background: #fff;
  color: #666;
}
.tb-find {
  margin-left: 7px;
}
.tb-menu {
  margin-left: 15px;
}
.tb-list {
  height: 146px;
  padding: 4px 2px 3px;
  background: #fff;
  border: 1px solid #dcdcdc;
}
.tb-band {
  position: relative;
  height: 23px;
  margin-bottom: 2px;
  padding-left: 23px;
  line-height: 23px;
  font-size: 13.5px;
  font-weight: 700;
  color: #000;
  background: #cdcdcd;
}
.tb-open {
  position: absolute;
  left: 9px;
  top: 7px;
  width: 0;
  height: 0;
  border-left: 5px solid #888;
  border-top: 5px solid transparent;
  border-bottom: 5px solid transparent;
}
.tb-shut {
  width: 0;
  height: 0;
  border-left: 7px solid transparent;
  border-bottom: 7px solid #9b9b9b;
}
.tb-band .tb-shut {
  position: absolute;
  left: 8px;
  top: 9px;
}
.tb-items {
  padding-top: 4px;
}
.tb-item {
  height: 29px;
  display: flex;
  align-items: center;
  padding-left: 30px;
  gap: 9px;
  color: #5a5a6c;
}

/* center document */
.center {
  position: relative;
  width: 1127px;
  flex: none;
  margin: 0 5px 0 6px;
  display: flex;
  flex-direction: column;
  background: #f0f0f0;
}
.c-head {
  height: 32px;
  flex: none;
  display: flex;
  align-items: center;
  background: #e5e5e5;
  border-bottom: 1px solid #cfcfcf;
  font-size: 12px;
}
.c-back {
  margin: -4px 23px 0 6px;
}
.c-title {
  width: 1036px;
  color: #666;
}
.c-x {
  margin-left: 17px;
}
.c-tabs {
  position: relative;
  height: 36px;
  flex: none;
  display: flex;
  background: #f0f0f0;
  border-bottom: 1px solid #cfcfcf;
  font-size: 23px;
  line-height: 36px;
  color: #4a4a4a;
}
.c-strip {
  width: 811px;
  display: flex;
  overflow: hidden;
}
.ct {
  display: flex;
  align-items: center;
  white-space: nowrap;
  gap: 5px;
  flex: none;
  padding-top: 2px;
}
.t-cut { width: 28px; padding-left: 6px; }
.t-phy { width: 270px; }
.t-fun { width: 253px; }
.t-str { width: 260px; gap: 2px; }
.ct-active {
  width: 274px;
  height: 36px;
  display: flex;
  align-items: center;
  padding: 2px 0 0 6px;
  font-size: 22.5px;
  background: #fff;
  border: 1px solid #cfcfcf;
  border-bottom: 0;
  gap: 4px;
}
.ct-x {
  margin-left: auto;
  margin-right: 12px;
}
.nav {
  position: absolute;
  top: 13px;
}
.arr-left.nav { left: 1092px; }
.arr-right.nav { left: 1112px; }

/* matrix options */
.mx-form {
  flex: none;
  height: 82px;
  padding: 18px 0 0 5px;
  display: grid;
  grid-template-columns: 53px 152px 25px 44px 152px 78px 160px 68px 153px 89px;
  grid-template-rows: 25px 25px;
  row-gap: 3px;
  align-content: start;
  white-space: nowrap;
}
.f-lab {
  line-height: 22px;
}
.f-lab.side-lab {
  line-height: 20px;
}
.f-lab.pl {
  padding-left: 8px;
}
.f-box {
  height: 21px;
  padding-left: 1px;
  line-height: 16px;
  background: #ececec;
  border: 1px solid #dedede;
}
.dots {
  justify-self: end;
  width: 21px;
  height: 22px;
  font: inherit;
  background: #fff;
  border: 1px solid #b5b5b5;
}
.dots.pressed {
  background: #c8c8c8;
  border-color: #c8c8c8;
}
.f-sel {
  position: relative;
  height: 24px;
  padding-left: 4px;
  line-height: 22px;
  background: #fff;
  border: 1px solid #dcdcdc;
}
.f-sel::after {
  content: "";
  position: absolute;
  right: 9px;
  top: 9px;
  border: 3px solid transparent;
  border-top: 4px solid #555;
  border-bottom: 0;
}
.f-btn {
  justify-self: end;
  width: 79px;
  height: 25px;
  font: inherit;
  color: #555;
  background: #f0f0f0;
  border: 1px solid #b0b0b0;
}

/* matrix */
.mx-frame {
  flex: 1;
  min-height: 0;
  margin: 0 10px 0 8px;
  padding: 5px 5px 0 4px;
  border: 1px solid #e3e3e3;
  border-bottom: 0;
  border-radius: 4px 4px 0 0;
  display: flex;
}
.mx-view {
  flex: 1;
  background: #cbcbcb;
  border-top: 2px solid #6a6a6a;
  border-left: 2px solid #6a6a6a;
  overflow: hidden;
}
.mx-grid {
  display: grid;
  grid-template-columns: 199px repeat(4, 35px);
  grid-template-rows: 255px 30px 31px 31px 31px;
}
.mx-corner {
  position: relative;
  display: flex;
  flex-direction: column;
  justify-content: space-between;
  background: #e5e5e5;
  border-right: 1px solid #b5b5b5;
  border-bottom: 2px solid #8c8c8c;
  padding: 1px 0 0 1px;
  font-size: 14px;
}
.mx-diag {
  position: absolute;
  left: 0;
  top: 0;
  width: 100%;
  height: 100%;
}
.mx-axis {
  position: relative;
  display: flex;
  align-items: center;
  gap: 6px;
}
.ax-top {
  justify-content: flex-end;
}
.mx-plus {
  width: 18px;
  height: 17px;
  line-height: 15px;
  text-align: center;
  font-size: 13px;
  font-weight: 400;
  background: #fff;
  border: 1px solid #b5b5b5;
}
.mx-col {
  display: flex;
  justify-content: center;
  align-items: flex-start;
  background: #e5e5e5;
  border-right: 1px solid #b5b5b5;
  border-bottom: 1px solid #b5b5b5;
  white-space: nowrap;
}
.mx-col span {
  height: 248px;
  line-height: 33px;
  writing-mode: vertical-rl;
  transform: translateX(-3px) rotate(180deg);
}
.mx-col.sel {
  background: #0a94ff;
  color: #fff;
}
.mx-row {
  padding-left: 5px;
  line-height: 29px;
  font-size: 13.5px;
  background: #e5e5e5;
  border-right: 1px solid #b5b5b5;
  border-bottom: 1px solid #b5b5b5;
}
.mx-row.sel {
  background: #0a94ff;
  color: #fff;
}
.mx-cell {
  display: flex;
  align-items: center;
  justify-content: center;
  background: #fff;
  border-right: 1px solid #b5b5b5;
  border-bottom: 1px solid #b5b5b5;
}
.mx-cell.hit {
  background: #e3fde3;
}
.mx-cell.cur {
  border: 1px solid #111;
  outline: 1px solid #111;
  outline-offset: -1px;
}
.mx-cell.blue {
  background: #0078d7;
}

/* popups over the matrix */
.popup {
  position: absolute;
  left: 214px;
  top: 138px;
  width: 252px;
  height: 60px;
  padding: 2px;
  font-size: 11.6px;
  background: #fff;
  border: 1px solid #bdbdbd;
  box-shadow: 1px 2px 4px rgba(0,0,0,0.25);
}
.popup-item {
  height: 28px;
  padding-left: 37px;
  line-height: 27px;
  color: #555;
}
.popup-item.on {
  background: #cdcdcd;
}
.tip {
  position: absolute;
  left: 470px;
  top: 140px;
  width: 141px;
  height: 80px;
  padding: 23px 0 0 14px;
  font-size: 11.3px;
  line-height: 19px;
  color: #222;
  background: #fff;
  border: 1px solid #4a74a6;
}

/* properties */
.props {
  height: 423px;
  flex: none;
  background: #f0f0f0;
}
.st-props {
  height: 38px;
  padding-top: 6px;
  padding-left: 9px;
  gap: 17px;
  color: #555;
}
.st-props .on { color: #5a7089; }
.pg-wrap {
  margin-top: 11px;
  height: 277px;
  display: flex;
  overflow: hidden;
  background: #e9e9e9;
  font-size: 12.2px;
}
.pg {
  width: 307px;
  flex: none;
  background: #eee;
}
.pg-cat {
  position: relative;
  height: 26px;
  padding-left: 30px;
  line-height: 25px;
  color: #444;
}
.pg-cat .tb-shut {
  position: absolute;
  left: 11px;
  top: 10px;
}
.pg-row {
  position: relative;
  height: 26px;
  margin-left: 25px;
  display: flex;
  line-height: 25px;
  background: #fff;
  color: #555;
}
.pg-row span:first-child {
  width: 151px;
  padding-left: 5px;
}
.pg-row span:nth-child(2) {
  padding-left: 6px;
}
.pg-row.name span:first-child {
  background: #efefef;
}
.pg-dots {
  position: absolute;
  right: 1px;
  top: 1px;
  width: 25px;
  height: 24px;
  font: inherit;
  background: #e3e3e3;
  border: 1px solid #d0d0d0;
}
.dock-tabs {
  height: 26px;
  padding-left: 2px;
  display: flex;
  background: #e5e5e5;
  border-top: 1px solid #c8c8c8;
  border-bottom: 1px solid #c8c8c8;
}
.dock-tabs a {
  display: block;
  height: 25px;
  line-height: 20px;
  padding: 0 6px;
  white-space: nowrap;
}
.dock-tabs a.on {
  width: 76px;
  background: #fff;
  border-bottom: 4px solid #ffd47f;
  margin-top: -1px;
}
.dock-tabs a.yl {
  width: 89px;
  margin-left: 4px;
  padding: 1px 6px 0;
  color: #555;
  border-bottom: 4px solid #f5f57a;
}

/* features */
.features {
  flex: 1;
  margin-top: 6px;
  background: #fff;
}
.features .pane-head {
  height: 42px;
}
.st-feat {
  height: 38px;
  padding-top: 4px;
  background: #f0f0f0;
  color: #555;
  white-space: nowrap;
}
.st-feat a {
  width: 64px;
  padding-left: 9px;
  height: 30px;
}
.ft-gap {
  height: 11px;
  background: #f0f0f0;
}
.ft-head {
  height: 34px;
  padding-left: 3px;
  display: flex;
  font-size: 13px;
  background: #e5e5e5;
  border-bottom: 1px solid #aaa;
  line-height: 33px;
}
.ft-head span {
  width: 48px;
  padding-left: 8px;
  border-right: 1px solid #c4c4c4;
}
.ft-head .first {
  width: 69px;
  background: #cdcdcd;
}
.ft-head .last {
  width: 64px;
  border-right: 0;
}
```
